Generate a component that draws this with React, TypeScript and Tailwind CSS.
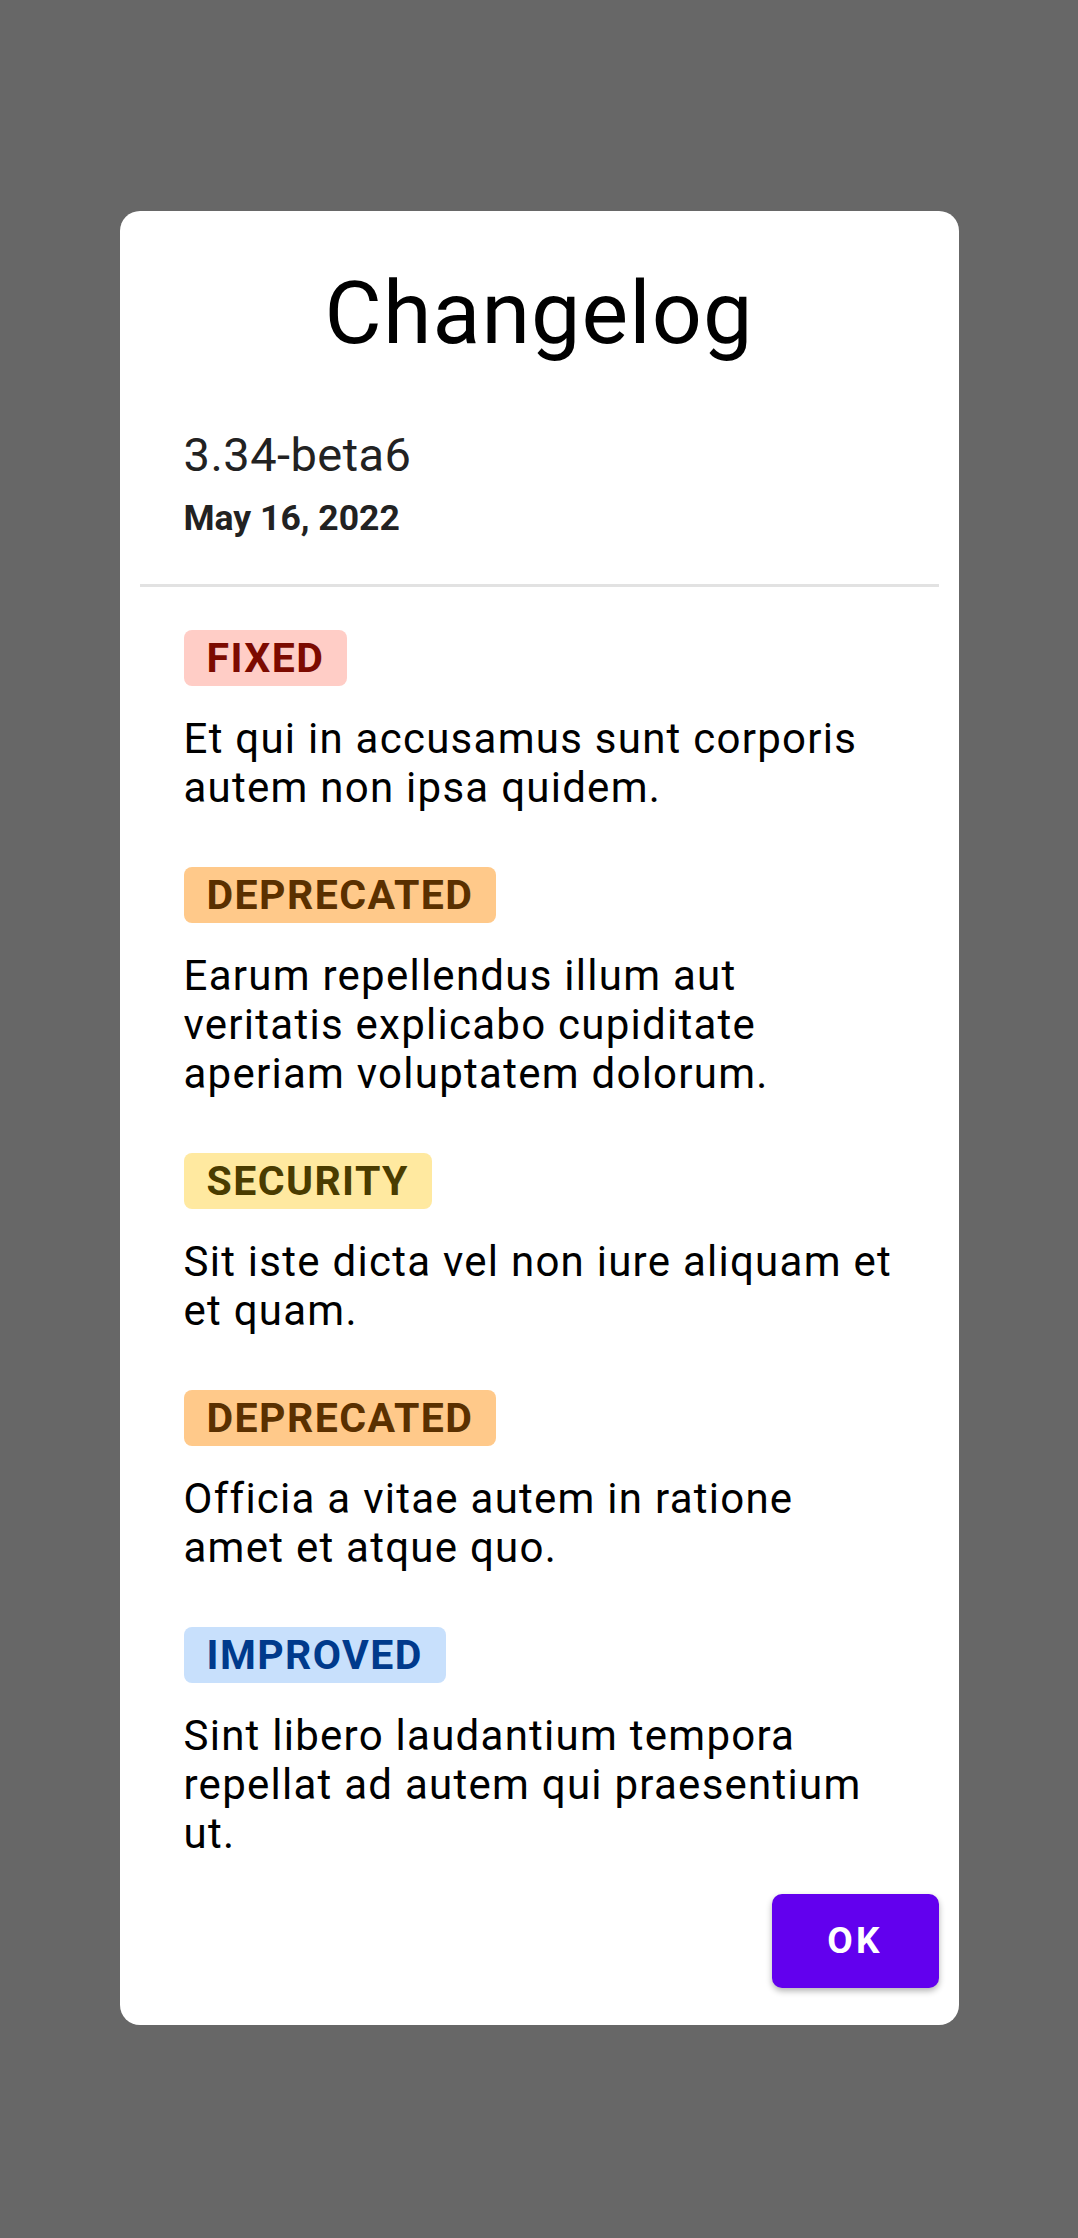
import React from "react";

type Entry = { tag: string; cls: string; text: string };

const entries: Entry[] = [
  {
    tag: "FIXED",
    cls: "bg-[#ffcdc6] text-[#7c0a00]",
    text: "Et qui in accusamus sunt corporis autem non ipsa quidem.",
  },
  {
    tag: "DEPRECATED",
    cls: "bg-[#ffc98a] text-[#5a3000]",
    text: "Earum repellendus illum aut veritatis explicabo cupiditate aperiam voluptatem dolorum.",
  },
  {
    tag: "SECURITY",
    cls: "bg-[#ffe9a0] text-[#4a3c00]",
    text: "Sit iste dicta vel non iure aliquam et et quam.",
  },
  {
    tag: "DEPRECATED",
    cls: "bg-[#ffc98a] text-[#5a3000]",
    text: "Officia a vitae autem in ratione amet et atque quo.",
  },
  {
    tag: "IMPROVED",
    cls: "bg-[#c8e0fc] text-[#003a8c]",
    text: "Sint libero laudantium tempora repellat ad autem qui praesentium ut.",
  },
];

export default function App() {
  return (
    <div
      className="min-h-[2238px] w-full bg-[#676767] pt-[211px]"
      style={{ fontFamily: "Roboto, 'Noto Sans', sans-serif" }}
    >
      <div className="mx-auto w-[839px] rounded-[20px] bg-white">
        <h1 className="pt-[51px] text-center text-[88px] font-normal leading-[101px] tracking-[0.012em] text-black">
          Changelog
        </h1>
        <div className="px-[64px]">
          <div className="mt-[64px] text-[47px] font-normal leading-[55px] tracking-[0.01em] text-[#222222]">
            3.34-beta6
          </div>
          <div className="mt-[15px] text-[35.5px] font-bold leading-[43px] text-[#222222]">
            May 16, 2022
          </div>
        </div>
        <div className="mx-[20px] mt-[44px] h-[3px] bg-[#e2e2e2]" />
        <div className="flex flex-col gap-[55px] px-[64px] pt-[43px]">
          {entries.map((e, i) => (
            <div key={i} className="flex flex-col items-start">
              <span
                className={`flex h-[56px] items-center rounded-[8px] px-[23px] text-[41px] font-bold leading-none tracking-[0.035em] ${e.cls}`}
              >
                {e.tag}
              </span>
              <p className="mt-[28px] text-[42px] leading-[49px] tracking-[0.03em] text-black">
                {e.text}
              </p>
            </div>
          ))}
        </div>
        <div className="flex justify-end pb-[37px] pr-[20px] pt-[36px]">
          <button className="flex h-[94px] w-[167px] items-center justify-center rounded-[10px] bg-[#6200ee] text-[37px] font-bold tracking-[0.09em] text-white shadow-[0_3px_6px_rgba(0,0,0,0.3)]">
            OK
          </button>
        </div>
      </div>
    </div>
  );
}
